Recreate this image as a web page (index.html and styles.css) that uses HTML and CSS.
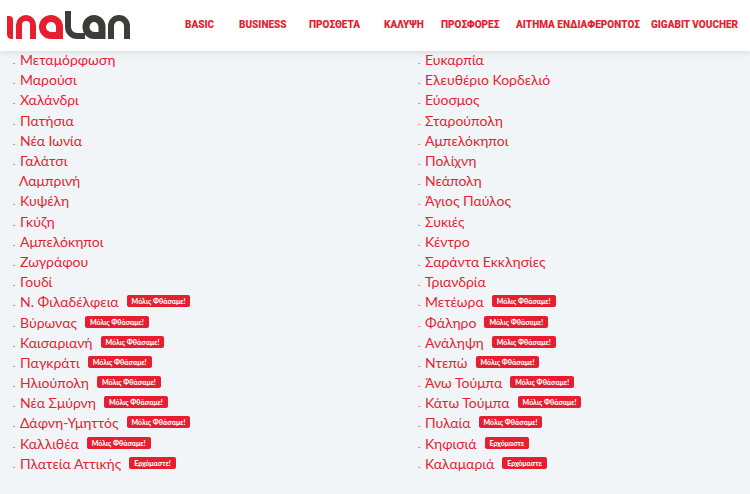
FILE: index.html
```
<!DOCTYPE html>
<html lang="el">
<head>
    <meta charset="UTF-8">
    <meta name="viewport" content="width=device-width, initial-scale=1.0">
    <title>Inalan</title>
    <link rel="stylesheet" href="styles.css">
</head>
<body>
    <header class="header">
        <a class="logo" href="#" aria-label="inalan">
            <svg width="124" height="28" viewBox="0 0 124 28" fill="none" stroke-width="6">
                <path fill="#e61e30" d="M0 5h2q4 0 4 4v19h-1q-5 0-5-5z"/>
                <g stroke="#e61e30">
                    <path d="M12 28V14a7 7 0 0 1 14 0V28"/>
                    <path stroke-width="7" d="M44 24.500h8.500V16a8.500 8.500 0 1 0-8.500 8.500z"/>
                </g>
                <g stroke="#3c3c3b">
                    <path d="M61 0V16a9 9 0 0 0 9 9h8"/>
                    <path stroke-width="7" d="M87 24.500h8V16a8 8.500 0 1 0-8 8.500z"/>
                    <path d="M104 28V15a8 8 0 0 1 16 0V28"/>
                </g>
            </svg>
        </a>
        <nav class="menu">
            <a href="#">BASIC</a>
            <a href="#">BUSINESS</a>
            <a href="#">ΠΡΟΣΘΕΤΑ</a>
            <a href="#">ΚΑΛΥΨΗ</a>
            <a href="#">ΠΡΟΣΦΟΡΕΣ</a>
            <a href="#">ΑΙΤΗΜΑ ΕΝΔΙΑΦΕΡΟΝΤΟΣ</a>
            <a href="#">GIGABIT VOUCHER</a>
        </nav>
    </header>
    <main class="coverage">
        <ul class="areas">
            <li>Μεταμόρφωση</li>
            <li>Μαρούσι</li>
            <li>Χαλάνδρι</li>
            <li>Πατήσια</li>
            <li>Νέα Ιωνία</li>
            <li>Γαλάτσι</li>
            <li class="plain">Λαμπρινή</li>
            <li>Κυψέλη</li>
            <li>Γκύζη</li>
            <li>Αμπελόκηποι</li>
            <li>Ζωγράφου</li>
            <li>Γουδί</li>
            <li>Ν. Φιλαδέλφεια <span class="badge">Μόλις Φθάσαμε!</span></li>
            <li>Βύρωνας <span class="badge">Μόλις Φθάσαμε!</span></li>
            <li>Καισαριανή <span class="badge">Μόλις Φθάσαμε!</span></li>
            <li>Παγκράτι <span class="badge">Μόλις Φθάσαμε!</span></li>
            <li>Ηλιούπολη <span class="badge">Μόλις Φθάσαμε!</span></li>
            <li>Νέα Σμύρνη <span class="badge">Μόλις Φθάσαμε!</span></li>
            <li>Δάφνη-Υμηττός <span class="badge">Μόλις Φθάσαμε!</span></li>
            <li>Καλλιθέα <span class="badge">Μόλις Φθάσαμε!</span></li>
            <li>Πλατεία Αττικής <span class="badge">Ερχόμαστε!</span></li>
        </ul>
        <ul class="areas">
            <li>Ευκαρπία</li>
            <li>Ελευθέριο Κορδελιό</li>
            <li>Εύοσμος</li>
            <li>Σταρούπολη</li>
            <li>Αμπελόκηποι</li>
            <li>Πολίχνη</li>
            <li>Νεάπολη</li>
            <li>Άγιος Παύλος</li>
            <li>Συκιές</li>
            <li>Κέντρο</li>
            <li>Σαράντα Εκκλησίες</li>
            <li>Τριανδρία</li>
            <li>Μετέωρα <span class="badge">Μόλις Φθάσαμε!</span></li>
            <li>Φάληρο <span class="badge">Μόλις Φθάσαμε!</span></li>
            <li>Ανάληψη <span class="badge">Μόλις Φθάσαμε!</span></li>
            <li>Ντεπώ <span class="badge">Μόλις Φθάσαμε!</span></li>
            <li>Άνω Τούμπα <span class="badge">Μόλις Φθάσαμε!</span></li>
            <li>Κάτω Τούμπα <span class="badge">Μόλις Φθάσαμε!</span></li>
            <li>Πυλαία <span class="badge">Μόλις Φθάσαμε!</span></li>
            <li>Κηφισιά <span class="badge">Ερχόμαστε</span></li>
            <li>Καλαμαριά <span class="badge">Ερχόμαστε</span></li>
        </ul>
    </main>
</body>
</html>
```

FILE: styles.css
```
* {
    box-sizing: border-box;
}
body {
    margin: 0;
    min-height: 100vh;
    display: flex;
    flex-direction: column;
    background-color: #f1f5f8;
    color: #e61e30;
    font-family: Lato, 'Open Sans', sans-serif;
}
.header {
    position: sticky;
    top: 0;
    z-index: 1;
    display: flex;
    align-items: center;
    justify-content: space-between;
    height: 51px;
    padding: 0 12px 2px 7px;
    background-color: #fff;
    box-shadow: 0 0 8px rgba(0, 0, 0, 0.15);
}
.logo {
    display: flex;
}
.menu {
    display: grid;
    grid-template-columns: 54px 70px 75px 57px 75px 135px 87px;
    font-family: Roboto, sans-serif;
    font-size: 10px;
    font-weight: 900;
}
.menu a {
    color: inherit;
    text-decoration: none;
    white-space: nowrap;
}
.coverage {
    flex: 1;
    display: grid;
    grid-template-columns: 1fr 1fr;
    gap: 73px;
    margin-top: -1px;
    padding: 0 0 20px 13px;
}
.areas {
    display: grid;
    margin: 0;
    padding: 0;
    list-style: none;
    font-size: 14px;
    line-height: 18px;
}
.areas li {
    display: flex;
    align-items: center;
}
.areas li::before {
    content: '.';
    width: 7px;
    font-size: 10px;
}
.areas .plain::before {
    content: '';
    width: 6px;
}
.badge {
    margin: 0 0 2px 8px;
    padding: 0 5px;
    border-radius: 2px;
    background-color: #e61e30;
    color: #fff;
    font-size: 7px;
    font-weight: 900;
    line-height: 12px;
}
```
